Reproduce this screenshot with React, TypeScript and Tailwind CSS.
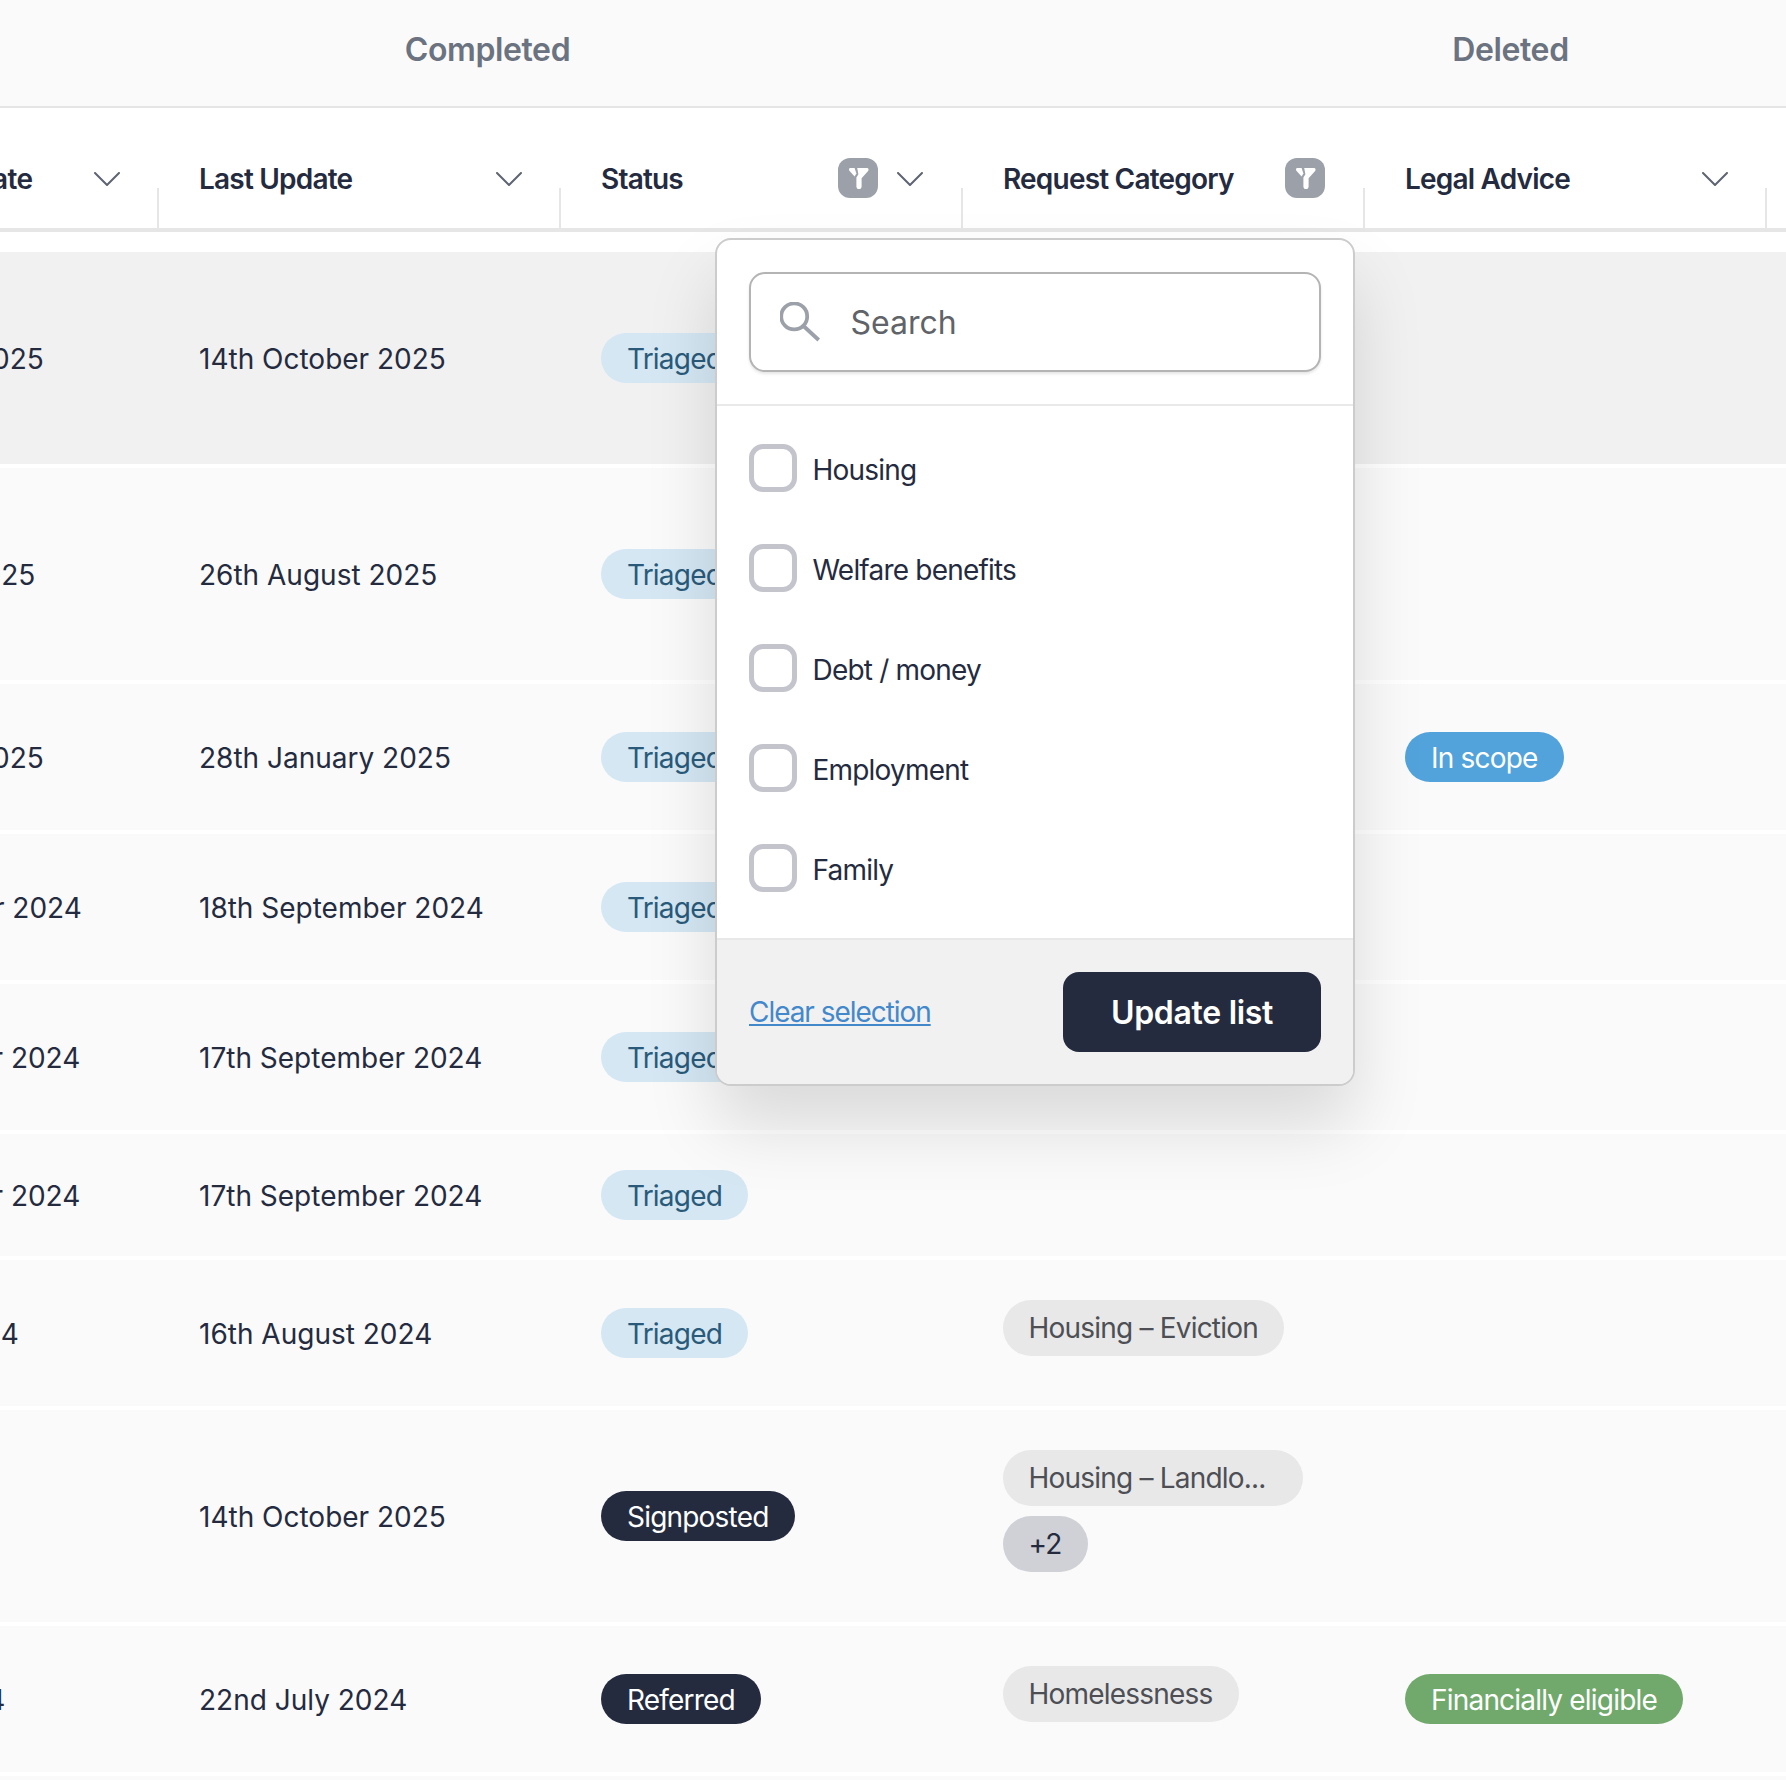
import React from "react";

const navy = "text-[#252b3f]";

function Chevron() {
  return (
    <svg width="26" height="14" viewBox="0 0 26 14" fill="none" className="mt-[2px] shrink-0">
      <path d="M1 1L13 13L25 1" stroke="#5f6473" strokeWidth="2" strokeLinecap="round" strokeLinejoin="round" />
    </svg>
  );
}

function FilterBadge() {
  return (
    <span className="flex h-[40px] w-[40px] shrink-0 items-center justify-center rounded-[12px] bg-[#9ca0a9]">
      <svg width="40" height="40" viewBox="0 0 40 40" fill="#fff">
        <path d="M12.4 10H16.6L18.4 15.6L16.6 18.4L11.4 12.8C10.5 11.6 11 10 12.4 10Z" />
        <path d="M19.2 10H29C30.5 10 31.1 11.8 30.1 13L23.6 20.2V28.4C23.6 30 22.5 31 21 31C19.5 31 18.4 30 18.4 28.4V19.4L20.4 16.2Z" />
      </svg>
    </span>
  );
}

function HeaderCell({ label, filter, chevron = true, labelClass = "tracking-[-0.8px]" }: { label: string; filter?: boolean; chevron?: boolean; labelClass?: string }) {
  return (
    <div className="flex h-[120px] w-[402px] shrink-0">
      <div className={`flex min-w-0 flex-1 items-center pl-[40px] pt-[20px] ${filter ? "gap-[19px] pr-[38px]" : "gap-[18px] pr-[37px]"}`}>
        <span className={`flex-1 whitespace-nowrap pt-[2px] text-[28px] font-semibold ${labelClass} ${navy}`}>{label}</span>
        {filter && <FilterBadge />}
        {chevron && <Chevron />}
      </div>
      <div className="h-[40px] w-[2px] shrink-0 self-end bg-[#e6e6e6]" />
    </div>
  );
}

function Pill({ label, className }: { label: string; className: string }) {
  return (
    <span className={`inline-flex h-[50px] items-center whitespace-nowrap rounded-full px-[26px] pt-[2px] text-[28px] tracking-[-0.8px] ${className}`}>
      {label}
    </span>
  );
}

function Chip({ label, more, wide }: { label: string; more?: boolean; wide?: boolean }) {
  return (
    <span
      className={`mb-[10px] flex h-[56px] items-center whitespace-nowrap rounded-full pl-[25.5px] pr-[26.5px] text-[28px] tracking-[-0.8px] ${
        wide ? "w-[300px]" : "w-fit"
      } ${more ? "bg-[#cfd1d6] text-[#252b3f]" : "bg-[#e8e8e8] text-[#4d4f55]"}`}
    >
      {label}
    </span>
  );
}

type Row = {
  h: string;
  created: string;
  updated: string;
  status: "Triaged" | "Signposted" | "Referred";
  chips?: string[];
  wide?: boolean;
  more?: string;
  legal?: "scope" | "eligible";
  bg?: string;
};

const rows: Row[] = [
  { h: "h-[212px]", created: "14th October 2025", updated: "14th October 2025", status: "Triaged", bg: "bg-[#f1f1f1]" },
  { h: "h-[212px]", created: "26th August 2025", updated: "26th August 2025", status: "Triaged" },
  { h: "h-[146px]", created: "14th October 2025", updated: "28th January 2025", status: "Triaged", legal: "scope" },
  { h: "h-[146px]", created: "18th September 2024", updated: "18th September 2024", status: "Triaged" },
  { h: "h-[146px]", created: "17th September 2024", updated: "17th September 2024", status: "Triaged" },
  { h: "h-[122px]", created: "17th September 2024", updated: "17th September 2024", status: "Triaged" },
  { h: "h-[146px]", created: "6th August 2024", updated: "16th August 2024", status: "Triaged", chips: ["Housing – Eviction"] },
  { h: "h-[212px]", created: "1st May 2025", updated: "14th October 2025", status: "Signposted", chips: ["Housing – Landlo..."], wide: true, more: "+2" },
  { h: "h-[146px]", created: "22nd July 2024", updated: "22nd July 2024", status: "Referred", chips: ["Homelessness"], legal: "eligible" },
  { h: "h-[146px]", created: "", updated: "", status: "Referred" },
];

function TableRow({ row, last }: { row: Row; last?: boolean }) {
  return (
    <div className={`flex ${row.h} ${row.bg ?? "bg-[#fafafa]"} text-[28px] ${navy}`}>
      <div className="flex w-[402px] shrink-0 items-center whitespace-nowrap pl-[40px] pt-[2px]">{row.created}</div>
      <div className="flex w-[402px] shrink-0 items-center whitespace-nowrap pl-[40px] pt-[2px]">{row.updated}</div>
      <div className="flex w-[402px] shrink-0 items-center pl-[40px]">
        {!last && (
          <Pill
            label={row.status}
            className={row.status === "Triaged" ? "bg-[#d4e7f3] text-[#2a5a7a]" : "bg-[#252b3f] text-white"}
          />
        )}
      </div>
      <div className="flex w-[402px] shrink-0 flex-col justify-center pl-[40px]">
        {row.chips?.map((c) => <Chip key={c} label={c} wide={row.wide} />)}
        {row.more && <Chip label={row.more} more />}
      </div>
      <div className="flex w-[402px] shrink-0 items-center pl-[40px]">
        {row.legal === "scope" && <Pill label="In scope" className="bg-[#52a3dc] text-white" />}
        {row.legal === "eligible" && <Pill label="Financially eligible" className="bg-[#70a96b] text-white" />}
      </div>
    </div>
  );
}

function Option({ label }: { label: string }) {
  return (
    <label className="flex h-[48px] items-center gap-[15.5px]">
      <span className="h-[48px] w-[48px] shrink-0 rounded-[14px] border-[5px] border-[#c4c5cc] bg-white" />
      <span className={`pt-[4px] text-[28px] tracking-[-0.8px] ${navy}`}>{label}</span>
    </label>
  );
}

function FilterMenu() {
  return (
    <div className="absolute left-[715px] top-[238px] flex h-[848px] w-[640px] flex-col overflow-hidden rounded-[16px] border-2 border-[#cccccc] bg-white shadow-[0_40px_70px_rgba(0,0,0,0.13)]">
      <div className="border-b-2 border-[#e9e9e9] px-[32px] py-[32px]">
        <div className="flex h-[100px] items-center gap-[31px] rounded-[16px] border-2 border-[#b4b4b4] bg-white pl-[29px] shadow-[0_2px_3px_rgba(0,0,0,0.1)]">
          <svg width="40" height="40" viewBox="0 0 40 40" fill="none" className="shrink-0">
            <circle cx="14.2" cy="14.4" r="13" stroke="#9ca0a9" strokeWidth="3.8" />
            <path d="M23.5 24L38.7 38" stroke="#9ca0a9" strokeWidth="3.8" />
          </svg>
          <span className="-ml-[0.6px] pt-[2px] text-[32px] text-[#606368]">Search</span>
        </div>
      </div>
      <div className="flex flex-1 flex-col gap-[52px] px-[32px] pt-[38px]">
        {["Housing", "Welfare benefits", "Debt / money", "Employment", "Family"].map((o) => (
          <Option key={o} label={o} />
        ))}
      </div>
      <div className="flex h-[146px] items-center justify-between border-t-2 border-[#e8e8e8] bg-[#f1f1f1] px-[32px]">
        <span className="text-[28px] tracking-[-1.05px] text-[#4488cc] underline">Clear selection</span>
        <span className="flex h-[80px] w-[258px] items-center justify-center rounded-[16px] bg-[#252b3f] pt-[2px] text-[32px] font-semibold tracking-[-0.3px] text-white">
          Update list
        </span>
      </div>
    </div>
  );
}

export default function App() {
  return (
    <div className="relative h-[1780px] w-[1786px] overflow-hidden bg-white font-['Inter',sans-serif]">
      <div className="-ml-[24px] flex h-[108px] w-[2100px] border-b-2 border-[#e5e5e5] bg-[#fafafa] pb-[6px] text-[32px] font-semibold tracking-[-0.4px] text-[#6b7280]">
        <div className="flex w-[1023px] items-center justify-center">Completed</div>
        <div className="flex w-[1023px] items-center justify-center">Deleted</div>
      </div>
      <div className="-ml-[243px] w-[2400px]">
        <div className="flex border-b-4 border-[#e6e6e6]">
          <HeaderCell label="Appointment Date" labelClass="tracking-[-0.6px]" />
          <HeaderCell label="Last Update" />
          <HeaderCell label="Status" filter />
          <HeaderCell label="Request Category" filter chevron={false} />
          <HeaderCell label="Legal Advice" />
          <HeaderCell label="" chevron={false} />
        </div>
        <div className="flex flex-col gap-[4px] pt-[20px]">
          {rows.map((r, i) => (
            <TableRow key={i} row={r} last={i === rows.length - 1} />
          ))}
        </div>
      </div>
      <FilterMenu />
    </div>
  );
}
